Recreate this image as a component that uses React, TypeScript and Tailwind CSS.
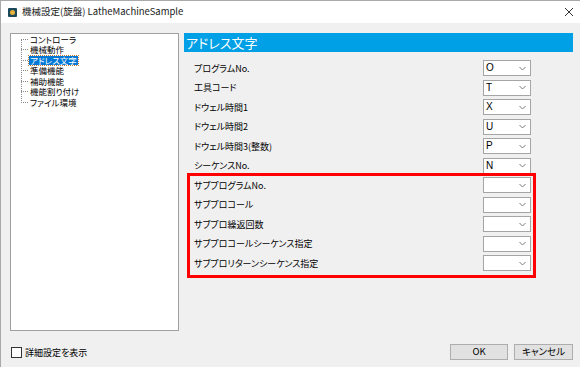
import { ReactNode } from 'react'

const jp = "font-['Noto_Sans_CJK_JP','Noto_Sans',sans-serif] [font-feature-settings:'palt']"

/**
 * Các dòng thiết lập địa chỉ.
 */
const rows: { label: string; value: string }[] = [
	{ label: 'プログラムNo.', value: 'O' },
	{ label: '工具コード', value: 'T' },
	{ label: 'ドウェル時間1', value: 'X' },
	{ label: 'ドウェル時間2', value: 'U' },
	{ label: 'ドウェル時間3(整数)', value: 'P' },
	{ label: 'シーケンスNo.', value: 'N' },
	{ label: 'サブプログラムNo.', value: '' },
	{ label: 'サブプロコール', value: '' },
	{ label: 'サブプロ繰返回数', value: '' },
	{ label: 'サブプロコールシーケンス指定', value: '' },
	{ label: 'サブプロリターンシーケンス指定', value: '' }
]

const treeItems = ['コントローラ', '機械動作', 'アドレス文字', '準備機能', '補助機能', '機能割り付け', 'ファイル環境']

function Combo({ value }: { value: string }): ReactNode {
	return (
		<div className="flex h-[16px] w-[48px] items-center justify-between border border-[#a5a5a5] bg-white pl-[2px] pr-[4px]">
			<span className="font-['Liberation_Sans',sans-serif] text-[10px] leading-none text-black">{value}</span>
			<svg width="7" height="5" viewBox="0 0 7 5">
				<path d="M0.5 1 L3.5 4 L6.5 1" fill="none" stroke="#7a7a7a" strokeWidth="1" />
			</svg>
		</div>
	)
}

export default function App(): ReactNode {
	return (
		<div className={`flex h-[367px] w-[580px] flex-col overflow-hidden border-l border-t border-[#a9a9a9] bg-[#f0f0f0] ${jp}`}>
			{/* Thanh tiêu đề */}
			<div className="flex h-[22px] shrink-0 items-center bg-white pl-[7px] pr-[5px]">
				<div className="flex h-[9px] w-[9px] items-center justify-center rounded-[1px] bg-[#1d4a5a]">
					<div className="h-[5px] w-[5px] rounded-full bg-[#e8b23a]" />
				</div>
				<span className="ml-[5px] text-[9.5px] leading-none text-[#222]">機械設定(旋盤) LatheMachineSample</span>
				<svg className="ml-auto mr-[1px]" width="10" height="10" viewBox="0 0 10 10">
					<path d="M1 1 L9 9 M9 1 L1 9" stroke="#333" strokeWidth="1" />
				</svg>
			</div>

			<div className="flex flex-1 flex-col pl-[9px] pr-[6px] pt-[10px]">
				<div className="flex gap-[5px]">
					{/* Cây danh mục */}
					<div className="relative h-[298px] w-[169px] border border-[#a0a0a0] bg-white">
						<div className="absolute left-[10px] top-[5px] h-[64px] border-l border-dotted border-[#8a8a8a]" />
						<div className="flex flex-col pl-[10px]">
							{treeItems.map((item) => (
								<div key={item} className="flex h-[10.5px] items-center">
									<div className="w-[7px] border-t border-dotted border-[#8a8a8a]" />
									<span
										className={
											item === 'アドレス文字'
												? 'ml-[1px] bg-[#0078d7] px-[1px] text-[8.5px] leading-[9px] text-white outline outline-1 outline-dotted outline-[#c07a3a]'
												: 'ml-[2px] text-[8.5px] leading-[9px] text-black'
										}
									>
										{item}
									</span>
								</div>
							))}
						</div>
					</div>

					{/* Bảng thiết lập */}
					<div className="relative w-[389px]">
						<div className="flex h-[19px] items-center bg-[#00a0e6] pl-[2px]">
							<span className="text-[13px] leading-none text-white">アドレス文字</span>
						</div>
						<div className="mt-[6.5px] flex flex-col">
							{rows.map((row) => (
								<div key={row.label} className="grid h-[19.5px] grid-cols-[289px_48px] items-center pl-[10px]">
									<span className="text-[9px] leading-none text-black">{row.label}</span>
									<Combo value={row.value} />
								</div>
							))}
						</div>
						<div className="absolute left-[3px] top-[140px] h-[105px] w-[349px] border-[3px] border-[#ff0000]" />
					</div>
				</div>

				{/* Thanh dưới */}
				<div className="mt-[13px] flex h-[16px] items-center">
					<div className="ml-[1px] h-[11px] w-[11px] border border-[#333] bg-white" />
					<span className="ml-[3px] text-[9px] leading-none text-black">詳細設定を表示</span>
					<button className="ml-auto h-[16px] w-[58px] border border-[#adadad] bg-[#e1e1e1] text-[9.5px] leading-none text-black">
						OK
					</button>
					<button className="ml-[6px] mr-[1px] h-[16px] w-[59px] border border-[#adadad] bg-[#e1e1e1] text-[9.5px] leading-none text-black">
						キャンセル
					</button>
				</div>
			</div>
		</div>
	)
}
